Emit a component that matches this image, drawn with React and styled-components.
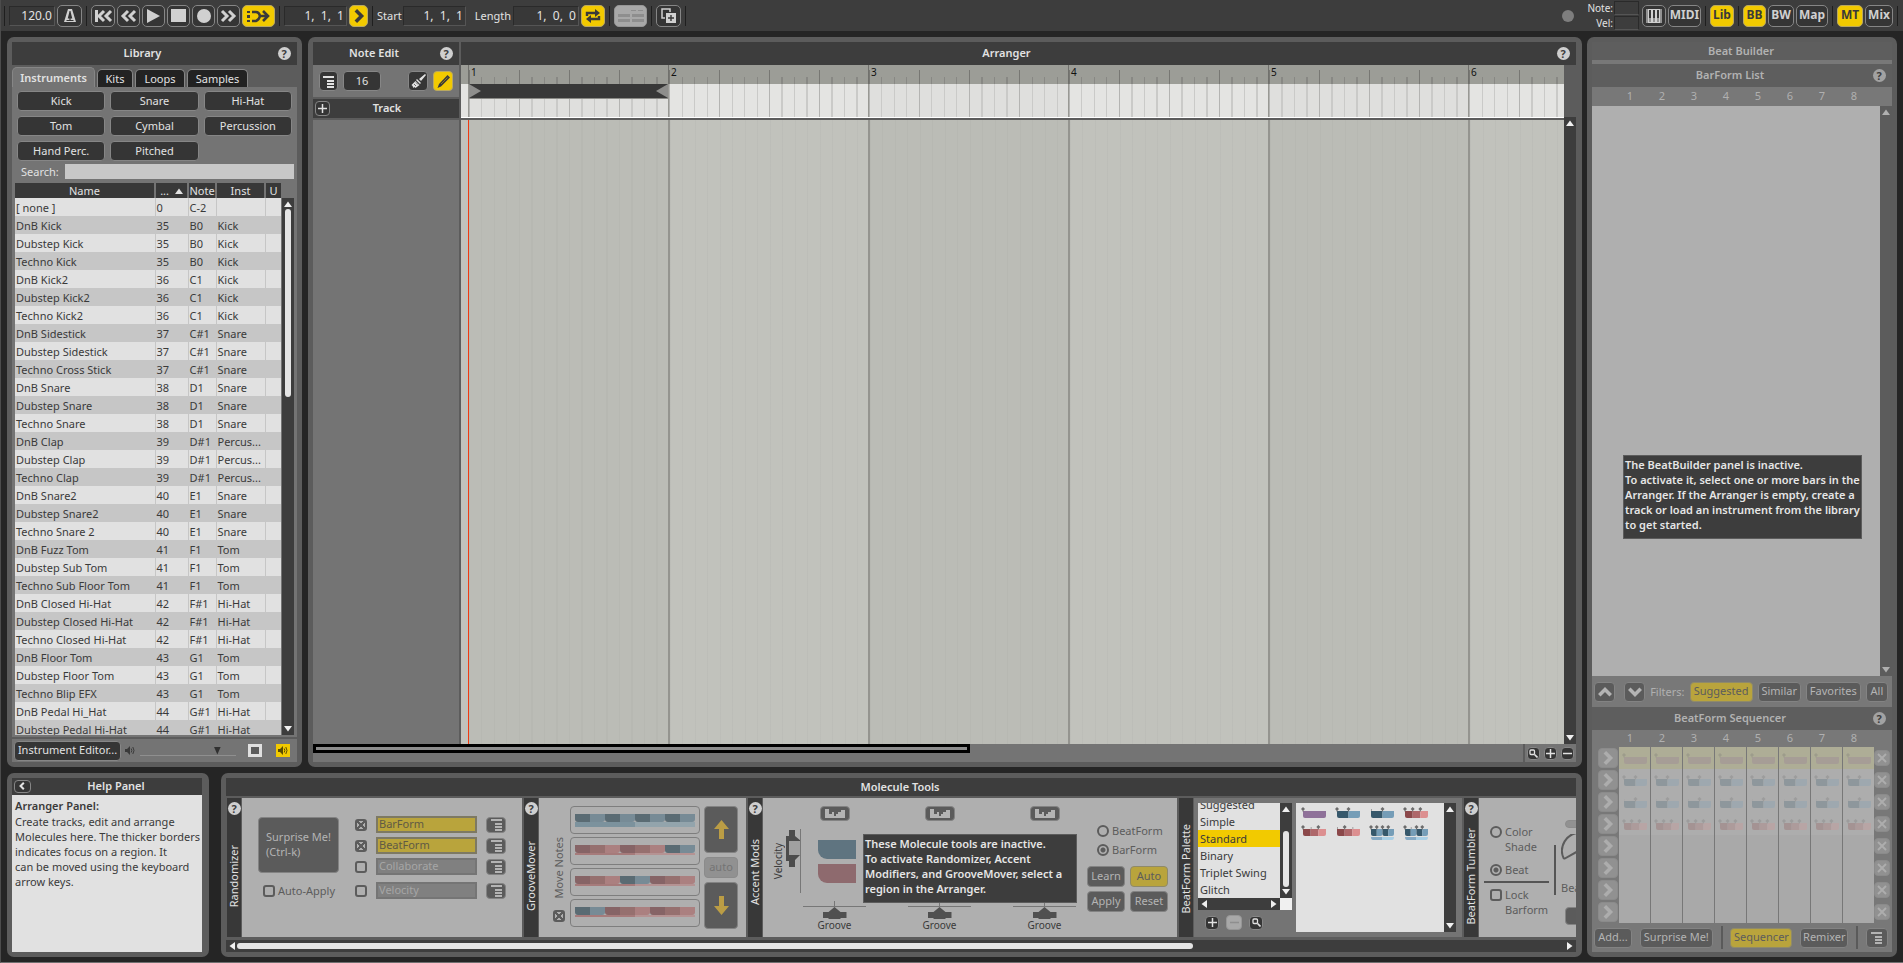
import React from "react";
import styled, { createGlobalStyle, css } from "styled-components";

const font = '"Noto Sans", "Open Sans", sans-serif';
const c = {
  page: "#252525",
  bar: "#3d3d3d",
  frame: "#5c5c5c",
  body: "#747474",
  edge: "#868686",
  dark: "#353535",
  text: "#e2e2e2",
  ink: "#3a3a3a",
  yellow: "#f2ca00",
  dim: "#afafaf",
  dimText: "#5c5c5c",
  dimYellow: "#b9a43c",
};

const Global = createGlobalStyle`
  * { box-sizing: border-box; }
  body { margin: 0; background: ${c.page}; }
  button, input, table { font: inherit; color: inherit; }
  button { padding: 0; cursor: pointer; }
  h1, h2, p, ul { margin: 0; padding: 0; }
`;

/* ---------- page frame ---------- */
const Page = styled.div`
  height: 100vh;
  min-height: 720px;
  display: flex;
  flex-direction: column;
  overflow: hidden;
  font: 11px/15px ${font};
  color: ${c.text};
  background: ${c.page};
  border-left: 1px solid #4c4c4c;
  border-bottom: 1px solid #707070;
`;
const Workspace = styled.main`
  flex: 1;
  min-height: 0;
  display: flex;
  gap: 5px;
  padding: 6px 6px 5px 6px;
`;
const LeftArea = styled.div`
  flex: 1;
  min-width: 0;
  display: flex;
  flex-direction: column;
  gap: 6px;
`;
const UpperRow = styled.div`
  flex: 1;
  min-height: 0;
  display: flex;
  gap: 6px;
`;
const LowerRow = styled.div`
  height: 184px;
  display: flex;
  gap: 12px;
`;
const Panel = styled.section`
  display: flex;
  flex-direction: column;
  flex: ${(p) => (p.$width ? `0 0 ${p.$width}` : "1")};
  min-width: 0;
  overflow: hidden;
  padding: 5px;
  padding-right: ${(p) => p.$right || "5px"};
  border-radius: 7px;
  background: ${c.frame};
`;
const Header = styled.header`
  flex: 0 0 ${(p) => p.$h || "23px"};
  display: grid;
  grid-template-columns: ${(p) => p.$cols || "1fr 22px"};
  align-items: center;
  justify-items: center;
  padding: 0 2px 1px 0;
  background: ${(p) => (p.$dim ? "#5e5e5e" : c.bar)};
  color: ${(p) => (p.$dim ? "#b2b2b2" : c.text)};
`;
const Title = styled.h2`
  padding-bottom: 1px;
  font-size: 11px;
  line-height: 15px;
  font-weight: 600;
`;
const HelpDot = styled.button`
  width: 13px;
  height: 13px;
  border: 0;
  border-radius: 50%;
  background: ${(p) => (p.$dim ? "#a2a2a2" : "#cfcfcf")};
  color: #3d3d3d;
  font-size: 11px;
  font-weight: 700;
  line-height: 13px;
`;
const Help = ({ dim }) => (
  <HelpDot $dim={dim} aria-label="Help">?</HelpDot>
);

/* ---------- buttons ---------- */
const tones = {
  dark: css`background: ${c.dark}; border-color: ${c.edge}; color: ${c.text};`,
  yellow: css`background: ${c.yellow}; border-color: #b9a860; color: ${c.ink};`,
  dim: css`background: #5b5b5b; border-color: #838383; color: #b4b4b4;`,
  dimYellow: css`background: ${c.dimYellow}; border-color: #8f8a6a; color: #5c5c5c;`,
  ghost: css`background: #919191; border-color: #8b8b8b; color: #adadad;`,
  light: css`background: #a8a8a8; border-color: #969696; color: #8e8e8e;`,
};
const Btn = styled.button`
  flex: none;
  display: flex;
  align-items: center;
  justify-content: center;
  width: ${(p) => p.$w || "auto"};
  height: ${(p) => p.$h || "20px"};
  border: 1px solid;
  border-radius: ${(p) => p.$r || "4px"};
  white-space: nowrap;
  ${(p) => tones[p.$tone || "dark"]}
  &:not([aria-label]) { padding-bottom: 2px; }
`;

/* ---------- icons ---------- */
const Svg = ({ w, h, children }) => (
  <svg width={w} height={h} viewBox={`0 0 ${w} ${h}`} fill="currentColor" aria-hidden="true">
    {children}
  </svg>
);
const ListIcon = () => (
  <Svg w={13} h={13}>
    <path d="M1 1h11v2H1zM5 5h7v2H5zM5 8h7v2H5zM5 11h7v2H5z" />
  </Svg>
);
const PlusIcon = () => (
  <Svg w={9} h={9}><path d="M4 0h1v4h4v1H5v4H4V5H0V4h4z" stroke="currentColor" strokeWidth=".5" /></Svg>
);
const MinusIcon = () => (
  <Svg w={9} h={9}><path d="M0 4h9v1H0z" stroke="currentColor" strokeWidth=".5" /></Svg>
);
const SearchIcon = () => (
  <Svg w={9} h={9}>
    <rect x="1" y="1" width="4.500" height="4.500" rx="1" fill="none" stroke="currentColor" strokeWidth="1.300" />
    <path d="M5.500 5.500l3 3" stroke="currentColor" strokeWidth="1.600" />
  </Svg>
);
const Chevron = ({ dir = "right", w = 11, h = 11 }) => {
  const turn = { right: 0, down: 90, left: 180, up: 270 }[dir];
  return (
    <svg width={w} height={h} viewBox="0 0 11 11" aria-hidden="true">
      <path d="M3 1l4.500 4.500L3 10" transform={`rotate(${turn} 5.500 5.500)`} fill="none" stroke="currentColor" strokeWidth="2.800" />
    </svg>
  );
};
const CrossIcon = () => (
  <Svg w={10} h={10}><path d="M1 1l8 8M9 1l-8 8" stroke="currentColor" strokeWidth="2" /></Svg>
);
const Tri = ({ dir }) => (
  <svg width="8" height="8" viewBox="0 0 8 8" aria-hidden="true">
    <path
      fill="currentColor"
      d={{ up: "M4 1.500L8 7H0z", down: "M4 6.500L8 1H0z", left: "M1.500 4L7 0v8z", right: "M6.500 4L1 0v8z" }[dir]}
    />
  </svg>
);
const Speaker = ({ color }) => (
  <svg width="10" height="9" viewBox="0 0 10 9" aria-hidden="true">
    <path d="M0 3h2l3-3v9L2 6H0z" fill={color} />
    <path d="M6.200 2.500q1.300 2 0 4M7.800 1q2.400 3.500 0 7" fill="none" stroke={color} strokeWidth="1" />
  </svg>
);

/* ---------- toolbar ---------- */
const Toolbar = styled.nav`
  flex: 0 0 31px;
  display: flex;
  justify-content: space-between;
  padding: 0 3px 0 1px;
  background: ${c.bar};
`;
const Tools = styled.div`
  display: flex;
  align-items: center;
  gap: 2px;
`;
const Sep = styled.i`
  flex: none;
  width: 1px;
  height: 20px;
  margin: 0 2px;
  background: #1f1f1f;
`;
const NumberBox = styled.input`
  width: ${(p) => p.$w || "63px"};
  height: 20px;
  padding: 0 2px;
  border: 1px solid #2a2a2a;
  border-right-color: #555;
  border-bottom-color: #555;
  background: #383838;
  text-align: right;
  font-size: 12px;
  outline: 0;
`;
const ToolLabel = styled.label`
  width: ${(p) => p.$w};
  text-align: right;
`;
const ToolBtn = styled(Btn)`
  height: 22px;
  border-radius: 5px;
  font-weight: 700;
  font-size: 12px;
  ${(p) => (!p.$tone || p.$tone === "dark") && "color: #d0d0d0;"}
`;
const Led = styled.span`
  width: 12px;
  height: 12px;
  margin-right: 13px;
  border-radius: 50%;
  background: #7e7e7e;
`;
const MidiReadout = styled.div`
  display: grid;
  grid-template-columns: 24px 25px;
  grid-auto-rows: 15px;
  align-items: center;
  justify-items: end;
  column-gap: 1px;
  margin-right: 1px;
  font-size: 10px;
`;
const ReadoutBox = styled.output`
  width: 25px;
  height: 14px;
  border: 1px solid #2a2a2a;
  border-bottom-color: #555;
`;

const TopBar = () => (
  <Toolbar>
    <Tools>
      <Sep />
      <NumberBox $w="46px" aria-label="Tempo" defaultValue="120.0" />
      <ToolBtn $w="25px" aria-label="Metronome">
        <Svg w={16} h={16}>
          <path d="M6 1h4l4 13H2z" />
          <path d="M8 3v9M4.500 12.500h7M6.500 10L8 4l1.500 6z" stroke="#353535" strokeWidth="1.200" fill="#353535" />
        </Svg>
      </ToolBtn>
      <Sep />
      <ToolBtn $w="24px" aria-label="To start">
        <Svg w={19} h={14}>
          <path d="M1 1h3v12H1z" />
          <path d="M10 2L5 7l5 5M17 2l-5 5 5 5" fill="none" stroke="currentColor" strokeWidth="3" />
        </Svg>
      </ToolBtn>
      <ToolBtn $w="23px" aria-label="Rewind">
        <Svg w={17} h={14}><path d="M8 2L3 7l5 5M15 2l-5 5 5 5" fill="none" stroke="currentColor" strokeWidth="3" /></Svg>
      </ToolBtn>
      <ToolBtn $w="23px" aria-label="Play"><Svg w={15} h={14}><path d="M1 0l13 7-13 7z" /></Svg></ToolBtn>
      <ToolBtn $w="23px" aria-label="Stop"><Svg w={15} h={13}><path d="M0 0h15v13H0z" /></Svg></ToolBtn>
      <ToolBtn $w="23px" aria-label="Record"><Svg w={14} h={14}><circle cx="7" cy="7" r="7" /></Svg></ToolBtn>
      <ToolBtn $w="23px" aria-label="Forward">
        <Svg w={17} h={14}><path d="M2 2l5 5-5 5M9 2l5 5-5 5" fill="none" stroke="currentColor" strokeWidth="3" /></Svg>
      </ToolBtn>
      <ToolBtn $w="33px" $tone="yellow" aria-label="Follow">
        <Svg w={26} h={14}>
          <path d="M1 2h3v2H1zM1 6h3v3H1zM1 11h3v2H1z" />
          <path d="M6 3h4q3 0 4 4h7M6 12h4q3-1 4-5M17 2l5 5-5 5" fill="none" stroke="currentColor" strokeWidth="2.600" />
        </Svg>
      </ToolBtn>
      <Sep />
      <NumberBox aria-label="Position" defaultValue="1,  1,  1" />
      <ToolBtn $w="19px" $tone="yellow" aria-label="Go"><Chevron w={14} h={14} /></ToolBtn>
      <Sep />
      <ToolLabel $w="24px" htmlFor="start">Start</ToolLabel>
      <NumberBox id="start" defaultValue="1,  1,  1" />
      <ToolLabel $w="43px" htmlFor="length">Length</ToolLabel>
      <NumberBox $w="66px" id="length" defaultValue="1,  0,  0" />
      <ToolBtn $w="24px" $tone="yellow" aria-label="Loop">
        <Svg w={16} h={14}>
          <path d="M2 7V4h9M14 7v3H5" fill="none" stroke="currentColor" strokeWidth="2.400" />
          <path d="M10 0l5 4-5 4zM6 6l-5 4 5 4z" />
        </Svg>
      </ToolBtn>
      <Sep />
      <ToolBtn $w="33px" $tone="light" aria-label="Split">
        <Svg w={26} h={12}><path d="M0 4h12v3H0zM14 4h12v3H14zM0 9h12v3H0zM14 9h12v3H14zM13 0h5v1h-5zM20 0h5v1h-5z" /></Svg>
      </ToolBtn>
      <Sep />
      <ToolBtn $w="25px" aria-label="Duplicate">
        <Svg w={15} h={15}>
          <path d="M4 10H1V1h8v3" fill="none" stroke="currentColor" strokeWidth="1.500" />
          <rect x="5" y="5" width="10" height="10" />
          <path d="M10 7v6M7 10h6" stroke="#353535" strokeWidth="1.400" />
        </Svg>
      </ToolBtn>
      <Sep />
    </Tools>
    <Tools>
      <Led />
      <MidiReadout>
        <span>Note:</span><ReadoutBox /><span>Vel:</span><ReadoutBox />
      </MidiReadout>
      <ToolBtn $w="24px" aria-label="Keyboard">
        <Svg w={16} h={14}>
          <rect width="16" height="14" />
          <path d="M3 1h2v8H3zM7 1h2v8H7zM11 1h2v8h-2z" fill="#353535" />
          <path d="M4 8v5M8 8v5M12 8v5M1 0v14M15 0v14" stroke="#353535" strokeWidth=".8" />
        </Svg>
      </ToolBtn>
      <ToolBtn $w="33px">MIDI</ToolBtn>
      <Sep />
      <ToolBtn $w="24px" $tone="yellow">Lib</ToolBtn>
      <Sep />
      <ToolBtn $w="23px" $tone="yellow">BB</ToolBtn>
      <ToolBtn $w="26px">BW</ToolBtn>
      <ToolBtn $w="32px">Map</ToolBtn>
      <Sep />
      <ToolBtn $w="26px" $tone="yellow">MT</ToolBtn>
      <ToolBtn $w="28px">Mix</ToolBtn>
      <Sep />
    </Tools>
  </Toolbar>
);

/* ---------- scroll bars ---------- */
const ScrollTrack = styled.div`
  flex: none;
  display: flex;
  align-items: center;
  justify-content: space-between;
  gap: 1px;
  padding: ${(p) => (p.$across ? "0 2px" : "2px 0")};
  flex-direction: ${(p) => (p.$across ? "row" : "column")};
  width: ${(p) => (p.$across ? "auto" : "12px")};
  height: ${(p) => (p.$across ? "12px" : "auto")};
  background: ${(p) => (p.$dim ? c.frame : c.bar)};
  color: ${(p) => (p.$dim ? "#b0b0b0" : "#f0f0f0")};
`;
const ScrollRun = styled.div`
  flex: 1;
  align-self: stretch;
  display: flex;
  justify-content: ${(p) => p.$end || "flex-start"};
  align-items: center;
  flex-direction: ${(p) => (p.$across ? "row" : "column")};
`;
const Thumb = styled.div`
  flex: 0 0 ${(p) => p.$size};
  ${(p) => (p.$across ? "height: 6px;" : "width: 6px;")}
  border-radius: 3px;
  background: #e4e4e4;
`;
const Scroll = ({ across, dim, size, end }) => (
  <ScrollTrack $across={across} $dim={dim}>
    <Tri dir={across ? "left" : "up"} />
    <ScrollRun $across={across} $end={end}>{size && <Thumb $across={across} $size={size} />}</ScrollRun>
    <Tri dir={across ? "right" : "down"} />
  </ScrollTrack>
);

/* ---------- library ---------- */
const Tabs = styled.div`
  flex: 0 0 22px;
  display: flex;
  align-items: flex-end;
  gap: 2px;
`;
const Tab = styled.button`
  height: ${(p) => (p.$on ? "20px" : "18px")};
  width: ${(p) => p.$w};
  border: 1px solid ${c.edge};
  border-bottom: 0;
  border-radius: 5px 5px 0 0;
  background: ${(p) => (p.$on ? c.body : "#222")};
  font-weight: ${(p) => (p.$on ? 600 : 400)};
`;
const LibBody = styled.div`
  flex: 1;
  min-height: 0;
  display: flex;
  flex-direction: column;
  padding: 4px 3px 2px;
  background: ${c.body};
`;
const Kinds = styled.div`
  display: grid;
  grid-template-columns: repeat(3, 1fr);
  gap: 5px;
  padding: 0 2px;
`;
const SearchRow = styled.div`
  display: flex;
  align-items: center;
  gap: 6px;
  margin: 3px 0 4px;
  padding-left: 6px;
`;
const SearchInput = styled.input`
  flex: 1;
  min-width: 0;
  height: 15px;
  border: 0;
  background: #c8c8c8;
  color: ${c.ink};
`;
const ListRow = styled.div`
  flex: 1;
  min-height: 0;
  display: flex;
`;
const ListClip = styled.div`
  flex: 1;
  overflow: hidden;
`;
const ListScroll = styled.div`
  display: flex;
  padding: 15px 0 0 1px;
`;
const Grid = styled.table`
  width: 100%;
  table-layout: fixed;
  border-collapse: collapse;
  color: ${c.ink};
`;
const Th = styled.th`
  width: ${(p) => p.$w};
  height: 15px;
  padding: 0;
  overflow: hidden;
  line-height: 15px;
  font-weight: 400;
  white-space: nowrap;
  background: #383838;
  color: ${c.text};
  border-right: 2px solid ${c.body};
  &:last-child { border-right: 0; }
  svg { margin-left: 3px; }
`;
const Tr = styled.tr`
  height: 18px;
  background: #e1e1e1;
  &:nth-child(even) { background: #c6c6c6; }
`;
const Td = styled.td`
  height: 18px;
  padding: 1px 0 0 1px;
  line-height: 17px;
  overflow: hidden;
  white-space: nowrap;
  border-right: 1px solid #c6c6c6;
  &:last-child { border-right: 0; }
`;
const LibFooter = styled.footer`
  flex: 0 0 25px;
  display: flex;
  align-items: center;
  gap: 4px;
  padding: 0 7px 0 2px;
  border-top: 2px solid ${c.frame};
  background: ${c.body};
`;
const Volume = styled.input`
  appearance: none;
  flex: 1;
  min-width: 0;
  height: 12px;
  margin: 0 8px 0 1px;
  background: linear-gradient(#8f8f8f, #8f8f8f) 0 10px / 100% 1px no-repeat;
  &::-webkit-slider-thumb {
    appearance: none;
    width: 7px;
    height: 8px;
    background: #303030;
    clip-path: polygon(0 0, 100% 0, 50% 100%);
  }
`;
const SmallSquare = styled.button`
  display: flex;
  align-items: center;
  justify-content: center;
  width: 14px;
  height: 13px;
  margin-left: ${(p) => (p.$stop ? "0" : "10px")};
  border: ${(p) => (p.$stop ? "3px solid #e0e0e0" : "0")};
  background: ${(p) => (p.$stop ? "#5c5c5c" : c.yellow)};
`;

const kinds = ["Kick", "Snare", "Hi-Hat", "Tom", "Cymbal", "Percussion", "Hand Perc.", "Pitched"];
const sounds = [
  ["[ none ]", 0, "C-2", ""],
  ["DnB Kick", 35, "B0", "Kick"], ["Dubstep Kick", 35, "B0", "Kick"], ["Techno Kick", 35, "B0", "Kick"],
  ["DnB Kick2", 36, "C1", "Kick"], ["Dubstep Kick2", 36, "C1", "Kick"], ["Techno Kick2", 36, "C1", "Kick"],
  ["DnB Sidestick", 37, "C#1", "Snare"], ["Dubstep Sidestick", 37, "C#1", "Snare"], ["Techno Cross Stick", 37, "C#1", "Snare"],
  ["DnB Snare", 38, "D1", "Snare"], ["Dubstep Snare", 38, "D1", "Snare"], ["Techno Snare", 38, "D1", "Snare"],
  ["DnB Clap", 39, "D#1", "Percus..."], ["Dubstep Clap", 39, "D#1", "Percus..."], ["Techno Clap", 39, "D#1", "Percus..."],
  ["DnB Snare2", 40, "E1", "Snare"], ["Dubstep Snare2", 40, "E1", "Snare"], ["Techno Snare 2", 40, "E1", "Snare"],
  ["DnB Fuzz Tom", 41, "F1", "Tom"], ["Dubstep Sub Tom", 41, "F1", "Tom"], ["Techno Sub Floor Tom", 41, "F1", "Tom"],
  ["DnB Closed Hi-Hat", 42, "F#1", "Hi-Hat"], ["Dubstep Closed Hi-Hat", 42, "F#1", "Hi-Hat"], ["Techno Closed Hi-Hat", 42, "F#1", "Hi-Hat"],
  ["DnB Floor Tom", 43, "G1", "Tom"], ["Dubstep Floor Tom", 43, "G1", "Tom"], ["Techno Blip EFX", 43, "G1", "Tom"],
  ["DnB Pedal Hi_Hat", 44, "G#1", "Hi-Hat"], ["Dubstep Pedal Hi-Hat", 44, "G#1", "Hi-Hat"],
];

const Library = () => (
  <Panel $width="295px">
    <Header><Title>Library</Title><Help /></Header>
    <Tabs>
      <Tab $on $w="83px">Instruments</Tab>
      <Tab $w="36px">Kits</Tab>
      <Tab $w="50px">Loops</Tab>
      <Tab $w="61px">Samples</Tab>
    </Tabs>
    <LibBody>
      <Kinds>{kinds.map((k) => <Btn key={k}>{k}</Btn>)}</Kinds>
      <SearchRow>
        <label htmlFor="search">Search:</label>
        <SearchInput id="search" />
      </SearchRow>
      <ListRow>
        <ListClip>
          <Grid>
            <thead>
              <tr>
                <Th $w="140px">Name</Th>
                <Th $w="33px">... <Tri dir="up" /></Th>
                <Th $w="28px">Note</Th>
                <Th $w="49px">Inst</Th>
                <Th>U</Th>
              </tr>
            </thead>
            <tbody>
              {sounds.map((s) => (
                <Tr key={s[0]}>{s.map((v, i) => <Td key={i}>{v}</Td>)}<Td /></Tr>
              ))}
            </tbody>
          </Grid>
        </ListClip>
        <ListScroll><Scroll size="188px" /></ListScroll>
      </ListRow>
    </LibBody>
    <LibFooter>
      <Btn $w="107px">Instrument Editor...</Btn>
      <Speaker color="#3a3a3a" />
      <Volume type="range" aria-label="Preview volume" defaultValue="83" />
      <SmallSquare $stop aria-label="Stop preview" />
      <SmallSquare aria-label="Preview sound"><Speaker color="#5a4c00" /></SmallSquare>
    </LibFooter>
  </Panel>
);

/* ---------- arranger ---------- */
const ArrangerBody = styled.div`
  flex: 1;
  min-height: 0;
  display: flex;
  gap: 2px;
`;
const TrackColumn = styled.div`
  flex: 0 0 146px;
  display: flex;
  flex-direction: column;
  gap: 2px;
`;
const NoteRow = styled.div`
  height: 32px;
  display: flex;
  align-items: center;
  padding: 0 6px;
  gap: 5px;
  background: ${c.body};
  > :nth-child(3) { margin-left: auto; }
`;
const TrackList = styled.div`
  flex: 1;
  background: ${c.body};
`;
const TimeBody = styled.div`
  flex: 1;
  min-width: 0;
  min-height: 0;
  display: flex;
`;
const TimeMain = styled.div`
  flex: 1;
  min-width: 0;
  display: flex;
  flex-direction: column;
`;
const TimeSide = styled.div`
  flex: 0 0 12px;
  display: flex;
  flex-direction: column;
  padding-top: 52px;
  > div { flex: 1; }
`;
const Strip = styled.div`
  flex: ${(p) => (p.$h ? `0 0 ${p.$h}` : "1")};
  display: flex;
  overflow: hidden;
  padding-left: 7px;
  background: ${(p) => p.$bg};
  ${(p) => p.$line && "border-bottom: 1px solid #fff;"}
`;
const ticks = (step, color, h) =>
  `repeating-linear-gradient(90deg, ${color} 0 1px, transparent 1px ${step}) 0 100% / 100% ${h} no-repeat`;
const RulerBar = styled.div`
  flex: 0 0 200px;
  padding-left: 2px;
  font-size: 10px;
  line-height: 15px;
  color: #111;
  border-left: 1px solid #70706c;
  background: ${ticks("50px", "#777773", "14px")}, ${ticks("12.5px", "#888884", "7px")};
`;
const LaneBar = styled.div`
  flex: 0 0 200px;
  border-left: 1px solid #999994;
  background: ${ticks("50px", "#b4b4b2", "100%")}, ${ticks("12.5px", "#cacac8", "100%")},
    ${(p) => (p.$odd ? "#dfdfdd" : "#e4e4e2")};
`;
const GridBar = styled.div`
  flex: 0 0 200px;
  border-left: ${(p) => (p.$first ? "1px solid #f03a10" : "2px solid #94948f")};
  background: ${ticks("12.5px", "rgba(0, 0, 0, 0.025)", "100%")}, ${(p) => (p.$odd ? "#bbbcb6" : "#c1c2bc")};
`;
const Region = styled.div`
  display: flex;
  justify-content: space-between;
  height: 15px;
  background: #383838;
  border-bottom: 1px solid #8a8a86;
  color: #8e8e8c;
`;
const ArrFooter = styled.footer`
  flex: 0 0 18px;
  display: flex;
  align-items: flex-start;
  justify-content: space-between;
  background: ${c.body};
`;
const Overview = styled.div`
  width: 52%;
  height: 9px;
  border: solid #000;
  border-width: 3px;
  background: #8c8c8c;
`;
const ZoomBtns = styled.div`
  height: 18px;
  display: flex;
  align-items: center;
  gap: 4px;
  padding: 0 2px;
  border-left: 2px solid ${c.frame};
`;
const SplitHead = styled.div`
  display: grid;
  grid-template-columns: 146px 1fr;
  gap: 2px;
  > * { height: 23px; }
`;
const bars = [1, 2, 3, 4, 5, 6];

const Arranger = () => (
  <Panel $right="6px">
    <SplitHead>
      <Header><Title>Note Edit</Title><Help /></Header>
      <Header><Title>Arranger</Title><Help /></Header>
    </SplitHead>
    <ArrangerBody>
      <TrackColumn>
        <NoteRow>
          <Btn $w="19px" aria-label="Note menu"><ListIcon /></Btn>
          <Btn $w="38px">16</Btn>
          <Btn $w="20px" aria-label="Brush">
            <Svg w={15} h={15}>
              <path d="M14 0l1 1-5 6-2-2zM6 5l4 4-1 1-4-4z" />
              <path d="M4.500 7l4 4-4 3-1-1-1 1-1-2-1-1z" />
              <path d="M3 10l2 2M5 8.500l2 2" stroke="#353535" strokeWidth=".7" />
            </Svg>
          </Btn>
          <Btn $w="20px" $tone="yellow" aria-label="Pencil">
            <Svg w={15} h={15}>
              <path d="M11.500 1l2.500 2.500L5 12.500 1.500 14 3 10z" />
              <path d="M5 10l6.500-6.500" stroke="#8d7a20" strokeWidth="1" />
            </Svg>
          </Btn>
        </NoteRow>
        <Header $h="19px" $cols="18px 1fr 14px">
          <Btn $w="15px" $h="15px" aria-label="Add track"><PlusIcon /></Btn>
          <Title>Track</Title>
        </Header>
        <TrackList />
      </TrackColumn>
      <TimeBody>
        <TimeMain>
          <Strip $h="19px" $bg="#9c9d97">{bars.map((b) => <RulerBar key={b}>{b}</RulerBar>)}</Strip>
          <Strip $h="34px" $bg="#e4e4e2" $line>
            {bars.map((b) => (
              <LaneBar key={b} $odd={b % 2}>
                {b === 1 && (
                  <Region>
                    <Svg w={12} h={14}><path d="M0 0l12 7-12 7z" /></Svg>
                    <Svg w={12} h={14}><path d="M12 0L0 7l12 7z" /></Svg>
                  </Region>
                )}
              </LaneBar>
            ))}
          </Strip>
          <Strip $h="2px" $bg={c.frame} />
          <Strip $bg="#c1c2bc">{bars.map((b) => <GridBar key={b} $first={b === 1} $odd={b % 2} />)}</Strip>
        </TimeMain>
        <TimeSide><Scroll /></TimeSide>
      </TimeBody>
    </ArrangerBody>
    <ArrFooter>
      <Overview />
      <ZoomBtns>
        <Btn $w="13px" $h="13px" aria-label="Zoom"><SearchIcon /></Btn>
        <Btn $w="13px" $h="13px" aria-label="Zoom in"><PlusIcon /></Btn>
        <Btn $w="13px" $h="13px" aria-label="Zoom out"><MinusIcon /></Btn>
      </ZoomBtns>
    </ArrFooter>
  </Panel>
);

/* ---------- help panel ---------- */
const HelpText = styled.div`
  flex: 1;
  padding: 3px 0 0 3px;
  background: #e1e1e1;
  color: ${c.ink};
  strong { display: block; line-height: 16px; font-weight: 600; }
`;
const HelpPanel = () => (
  <Panel $width="202px" $right="7px">
    <Header $h="17px" $cols="20px 1fr">
      <Btn $w="17px" $h="13px" aria-label="Collapse"><Chevron dir="left" w={8} h={8} /></Btn>
      <Title>Help Panel</Title>
    </Header>
    <HelpText>
      <strong>Arranger Panel:</strong>
      <p>
        Create tracks, edit and arrange<br />Molecules here. The thicker borders<br />indicates focus on a region. It
        <br />can be moved using the keyboard<br />arrow keys.
      </p>
    </HelpText>
  </Panel>
);

/* ---------- beat drawings ---------- */
const palettes = {
  violet: ["#8f7199"],
  blue2: ["#36586b", "#759db7"],
  red3: ["#8b484a", "#ae676a", "#dc8f90"],
  blue4: ["#36586b", "#759db7", "#36586b", "#759db7"],
};
/* marks: "o" is a note, "." is a faint tick */
const Beat = ({ kind, marks, sub }) => {
  const cols = palettes[kind];
  const step = 23 / cols.length;
  const last = cols.length - 1;
  return (
    <svg width="26" height="16" viewBox="0 0 26 16" aria-hidden="true">
      {cols.map((col, i) => {
        const x = 2 + i * step;
        const e = x + step;
        const l = i === 0 || (last === 3 && i === 2) ? 2 : 0;
        const r = i === last || (last === 3 && i === 1) ? 2 : 0;
        return <path key={i} fill={col} d={`M${x} 4H${e}V${11 - r}Q${e} 11 ${e - r} 11H${x + l}Q${x} 11 ${x} ${11 - l}Z`} />;
      })}
      {sub && <path d="M2 12h11v3H4q-2 0-2-3z" fill="#86aac5" />}
      {sub && <path d="M13 12h12q0 3-2 3H13z" fill="#a9cfe5" />}
      {marks.split("").map((m, i) => {
        const x = 2 + (i * 23) / marks.length;
        return m === "o" ? (
          <path key={i} fill="#6c6c6c" d={`M${x} 0l2 2-1.500 1.500v1h-1v-1L${x - 2} 2z`} />
        ) : (
          <path key={i} fill="#a0a0a0" d={`M${x} 2h1v2h-1z`} />
        );
      })}
    </svg>
  );
};

/* ---------- molecule tools ---------- */
const Modules = styled.div`
  flex: 0 0 144px;
  display: flex;
  gap: 2px;
  overflow: hidden;
  padding: 2px 0 3px 1px;
`;
const Module = styled.article`
  flex: 0 0 ${(p) => p.$w};
  display: flex;
  gap: 1px;
`;
const Spine = styled.div`
  flex: 0 0 14px;
  display: flex;
  flex-direction: column;
  align-items: center;
  padding: 4px 0 ${(p) => p.$lift || "0"};
  background: #383838;
`;
const SpineName = styled.span`
  margin: auto 0;
  writing-mode: vertical-rl;
  rotate: 180deg;
  line-height: 14px;
  white-space: nowrap;
`;
const ModuleBody = styled.div`
  flex: 1;
  min-width: 0;
  display: flex;
  background: ${(p) => p.$bg || c.dim};
  color: ${c.dimText};
  padding: ${(p) => p.$pad || "0"};
  gap: ${(p) => p.$gap || "0"};
`;
const Column = styled.div`
  display: flex;
  flex-direction: column;
  align-items: ${(p) => p.$align || "flex-start"};
  gap: ${(p) => p.$gap || "4px"};
  padding: ${(p) => p.$pad || "0"};
  ${(p) => p.$w && `width: ${p.$w};`}
`;
const Line = styled.div`
  display: flex;
  align-items: ${(p) => p.$align || "center"};
  gap: ${(p) => p.$gap || "9px"};
  ${(p) => p.$top && `margin-top: ${p.$top};`}
`;
const Check = styled.input`
  appearance: none;
  flex: none;
  width: 12px;
  height: 12px;
  margin: ${(p) => p.$m || "0"};
  border: 2px solid ${c.dimText};
  border-radius: ${(p) => (p.type === "radio" ? "50%" : "3px")};
  &:checked {
    background: ${(p) =>
      p.type === "radio"
        ? `radial-gradient(${c.dimText} 0 2px, transparent 3px)`
        : `linear-gradient(45deg, transparent 42%, ${c.dimText} 42% 58%, transparent 58%),
           linear-gradient(135deg, transparent 42%, ${c.dimText} 42% 58%, transparent 58%)`};
  }
`;
const Opt = styled.label`
  display: flex;
  align-items: ${(p) => p.$align || "center"};
  gap: 3px;
`;
const Meter = styled.div`
  width: 101px;
  height: 17px;
  padding: 0 1px;
  border: 2px solid ${(p) => (p.$on ? "#7d7963" : "#757575")};
  line-height: 12px;
  background: ${(p) => (p.$on ? c.dimYellow : "#808080")};
  color: ${(p) => (p.$on ? "#605a44" : "#a6a6a6")};
`;
const BigBtn = styled(Btn)`
  justify-content: flex-start;
  padding-left: 7px;
  text-align: left;
  line-height: 15px;
`;
const PatternBtn = styled.button`
  width: 130px;
  height: 28px;
  display: flex;
  justify-content: center;
  align-items: center;
  border: 1px solid #7e7e7e;
  border-radius: 4px;
  background: transparent;
`;
const SideText = styled.span`
  writing-mode: vertical-rl;
  rotate: 180deg;
  line-height: 14px;
  font-size: ${(p) => p.$size || "11px"};
  color: ${(p) => p.$color || "inherit"};
`;

const B = ["#5a6b73", "#778b96"];
const R = ["#866466", "#96706f", "#ab8080"];
const patterns = [
  [[B, B, B, B], "#7c929d", "#93a4ac"],
  [[R, R, B], "#a67b7b", "#b59393"],
  [[R, B, R], "#a67b7b", "#b59393"],
  [[B, R, R], "#a67b7b", "#b59393"],
];
const Pattern = ({ id, groups, low, low2, tall }) => {
  const w = 15;
  let x = 0;
  const beats = groups.map((g, gi) => {
    const start = x;
    x += g.length * w;
    return (
      <g key={gi}>
        <clipPath id={`beat-${id}-${gi}`}>
          <path d={`M${start} 0H${x}V5Q${x} 8 ${x - 3} 8H${start + 3}Q${start} 8 ${start} 5Z`} />
        </clipPath>
        <g clipPath={`url(#beat-${id}-${gi})`}>
          {g.map((col, i) => <rect key={i} x={start + i * w} width={w} height="8" fill={col} />)}
        </g>
      </g>
    );
  });
  return (
    <svg width="120" height="13" viewBox="0 0 120 13" aria-hidden="true">
      {beats}
      <rect y="8" width="60" height={tall ? 5 : 2} fill={low} />
      <rect x="60" y="8" width="60" height={tall ? 5 : 2} fill={low2} />
    </svg>
  );
};
const Arrow = ({ down }) => (
  <svg width="15" height="19" viewBox="0 0 15 19" aria-hidden="true">
    <path fill="#bb9d45" d={down ? "M5 0h5v10h5l-7.500 9L0 10h5z" : "M7.500 0L15 9h-5v10H5V9H0z"} />
  </svg>
);
const Random = () => (
  <Module $w="295px">
    <Spine><Help /><SpineName>Randomizer</SpineName></Spine>
    <ModuleBody $pad="18px 0 0 16px" $gap="16px">
      <Column $gap="10px" $pad="1px 0 0">
        <BigBtn $w="81px" $h="56px" $tone="dim">Surprise Me!<br />(Ctrl-k)</BigBtn>
        <Opt><Check type="checkbox" $m="0 0 0 5px" />Auto-Apply</Opt>
      </Column>
      <Column>
        {[["BarForm", true], ["BeatForm", true], ["Collaborate", false], ["Velocity", false]].map(([n, on]) => (
          <Line key={n} $top={n === "Velocity" ? "3px" : ""}>
            <Check type="checkbox" defaultChecked={on} aria-label={n} />
            <Meter $on={on}>{n}</Meter>
            <Btn $w="20px" $h="16px" $tone="dim" aria-label={`${n} menu`}><ListIcon /></Btn>
          </Line>
        ))}
      </Column>
    </ModuleBody>
  </Module>
);
const Groove = () => (
  <Module $w="222px">
    <Spine><Help /><SpineName>GrooveMover</SpineName></Spine>
    <ModuleBody $pad="8px 8px 0 12px" $gap="4px">
      <Column $align="center" $gap="11px" $pad="31px 0 0" $w="15px">
        <SideText>Move Notes</SideText>
        <Check type="checkbox" defaultChecked aria-label="Move Notes" />
      </Column>
      <Column $gap="3px">
        {patterns.map(([g, a, b], i) => (
          <PatternBtn key={i} aria-label={`Pattern ${i + 1}`}><Pattern id={i} groups={g} low={a} low2={b} tall={i === 0} /></PatternBtn>
        ))}
      </Column>
      <Column $gap="4px">
        <Btn $w="34px" $h="47px" $tone="dim" aria-label="Move up"><Arrow /></Btn>
        <AutoBtn $w="34px" $h="21px" $tone="ghost">auto</AutoBtn>
        <Btn $w="34px" $h="47px" $tone="dim" aria-label="Move down"><Arrow down /></Btn>
      </Column>
    </ModuleBody>
  </Module>
);
const AutoBtn = styled(Btn)`
  color: #747474;
`;
const AccentColumns = styled.div`
  display: grid;
  grid-template-columns: repeat(3, 63px);
  column-gap: 42px;
  justify-items: center;
  padding-left: 40px;
`;
const AccentMain = styled.div`
  width: 324px;
  display: flex;
  flex-direction: column;
  justify-content: space-between;
  padding: 8px 0 6px 0;
`;
const VelocityRow = styled.div`
  display: flex;
  align-items: center;
  gap: 1px;
  padding-left: 8px;
`;
const Slot = styled.div`
  width: 63px;
  display: flex;
  flex-direction: column;
  align-items: center;
  color: ${c.ink};
  font-size: 10px;
  line-height: 12px;
`;
const GrooveRange = styled.input`
  appearance: none;
  width: 63px;
  height: 18px;
  margin: 0;
  background:
    linear-gradient(#777, #777) 50% 0 / 1px 6px no-repeat,
    linear-gradient(#777, #777) 0 5px / 100% 1px no-repeat;
  &::-webkit-slider-thumb {
    appearance: none;
    width: 24px;
    height: 12px;
    margin-top: 6px;
    background: #505050;
    clip-path: polygon(0 42%, 25% 42%, 50% 0, 75% 42%, 100% 42%, 100% 92%, 75% 92%, 75% 100%, 25% 100%, 25% 92%, 0 92%);
  }
`;
const Swatches = styled.div`
  display: grid;
  gap: 5px;
  margin-left: 12px;
`;
const Swatch = styled.div`
  width: 38px;
  height: 19px;
  border-radius: 0 0 0 9px;
  background: ${(p) => p.$color};
`;
const Accent = () => (
  <Module $w="429px">
    <Spine $lift="7px"><Help /><SpineName>Accent Mods</SpineName></Spine>
    <ModuleBody>
      <AccentMain>
        <AccentColumns>
          {[1, 2, 3].map((n) => (
            <Btn key={n} $w="30px" $h="15px" $tone="dim" aria-label={`Accent shape ${n}`}>
              <Svg w={20} h={9}><path d="M0 0h4v5h3V3h2v4h2V5h2V3h3V1h4v8H0z" /></Svg>
            </Btn>
          ))}
        </AccentColumns>
        <VelocityRow>
          <SideText $size="10px" $color={c.ink}>Velocity</SideText>
          <Svg w={19} h={64}>
            <path d="M3 1h6v6l6 5v13l-6 6v7H3v-6H0V7h3z" fill="#4c4c4c" />
            <path d="M3 12h12v14H3z" fill="#a0a0a0" />
            <path d="M14 0h1v64h-1z" fill="#777" />
          </Svg>
          <Swatches><Swatch $color="#5f7480" /><Swatch $color="#8e6a6e" /></Swatches>
        </VelocityRow>
        <AccentColumns>
          {[1, 2, 3].map((n) => (
            <Slot key={n}>
              <GrooveRange type="range" id={`groove${n}`} defaultValue="50" />
              <label htmlFor={`groove${n}`}>Groove</label>
            </Slot>
          ))}
        </AccentColumns>
      </AccentMain>
      <Column $gap="4px" $pad="25px 0 0 0">
        <Column $gap="4px" $pad="0 0 5px 10px">
          <Opt><Check type="radio" name="form" />BeatForm</Opt>
          <Opt><Check type="radio" name="form" defaultChecked />BarForm</Opt>
        </Column>
        <Line $gap="5px">
          <Btn $w="38px" $h="21px" $tone="dim">Learn</Btn>
          <Btn $w="38px" $h="21px" $tone="dimYellow">Auto</Btn>
        </Line>
        <Line $gap="5px">
          <Btn $w="38px" $h="21px" $tone="dim">Apply</Btn>
          <Btn $w="38px" $h="21px" $tone="dim">Reset</Btn>
        </Line>
      </Column>
    </ModuleBody>
  </Module>
);
const StyleBox = styled.div`
  display: grid;
  grid-template: 95px 12px / 82px 12px;
  background: #f0f0f0;
`;
const StyleList = styled.ul`
  display: flex;
  flex-direction: column;
  justify-content: flex-end;
  overflow: hidden;
  list-style: none;
  background: #e1e1e1;
  color: ${c.ink};
`;
const StyleItem = styled.li`
  flex: 0 0 17px;
  padding-left: 2px;
  line-height: 17px;
  background: ${(p) => (p.$on ? c.yellow : "transparent")};
`;
const BeatSheet = styled.div`
  width: 148px;
  display: grid;
  grid-template-columns: repeat(4, 34px);
  grid-auto-rows: 18px;
  align-content: start;
  padding: 4px 0 0 5px;
  background: #e1e1e1;
`;
const PaletteBtns = styled(Line)`
  padding-left: 7px;
`;
const Palette = () => (
  <Module $w="283px">
    <Spine $lift="2px"><SpineName>BeatForm Palette</SpineName></Spine>
    <ModuleBody $bg={c.body} $pad="5px 5px 5px 4px" $gap="4px">
      <Column $gap="5px">
        <StyleBox>
          <StyleList>
            {["Suggested", "Simple", "Standard", "Binary", "Triplet Swing", "Glitch"].map((n) => (
              <StyleItem key={n} $on={n === "Standard"}>{n}</StyleItem>
            ))}
          </StyleList>
          <Scroll size="56px" end="flex-end" />
          <Scroll across />
        </StyleBox>
        <PaletteBtns $gap="7px">
          <Btn $w="14px" $h="14px" aria-label="Add"><PlusIcon /></Btn>
          <Btn $w="16px" $h="15px" $tone="light" aria-label="Remove"><MinusIcon /></Btn>
          <Btn $w="14px" $h="14px" aria-label="Find"><SearchIcon /></Btn>
        </PaletteBtns>
      </Column>
      <Line $gap="0" $align="stretch">
        <BeatSheet>
          <Beat kind="violet" marks="o" />
          <Beat kind="blue2" marks="oo" />
          <Beat kind="blue2" marks=".o" />
          <Beat kind="red3" marks="ooo" />
          <Beat kind="red3" marks="o.o" />
          <Beat kind="red3" marks=".o." />
          <Beat kind="blue4" marks="oooo" sub />
          <Beat kind="blue4" marks="o.oo" sub />
        </BeatSheet>
        <Scroll />
      </Line>
    </ModuleBody>
  </Module>
);
const Rule = styled.hr`
  margin: 0;
  border: 0;
  background: #555;
  width: ${(p) => p.$w};
  height: ${(p) => p.$h};
`;
const TumblerSide = styled.div`
  flex: none;
  width: 60px;
  display: flex;
  flex-direction: column;
  align-items: flex-start;
  gap: 6px;
  padding-top: 22px;
  white-space: nowrap;
  > button { margin-left: 4px; }
  > span { margin: 2px 0 6px; }
`;
const Tumbler = () => (
  <Module $w="170px">
    <Spine><Help /><SpineName>BeatForm Tumbler</SpineName></Spine>
    <ModuleBody $pad="0 0 0 5px" $gap="5px">
      <Column $gap="0" $pad="26px 0 0 0" $w="65px">
        <Column $gap="8px" $pad="0 0 4px 6px">
          <Opt $align="flex-start"><Check type="radio" name="tumble" $m="2px 0 0" /><span>Color<br />Shade</span></Opt>
          <Opt><Check type="radio" name="tumble" defaultChecked />Beat</Opt>
        </Column>
        <Rule $w="65px" $h="2px" />
        <Column $pad="4px 0 0 6px">
          <Opt $align="flex-start"><Check type="checkbox" $m="2px 0 0" /><span>Lock<br />Barform</span></Opt>
        </Column>
      </Column>
      <Column $pad="47px 0 0 0"><Rule $w="2px" $h="50px" /></Column>
      <TumblerSide>
        <Btn $w="42px" $h="8px" $tone="ghost" aria-label="Tumble" />
        <Svg w={40} h={38}>
          <path d="M3 25A18 18 0 1 1 35 25" fill="none" stroke={c.dimText} strokeWidth="2" />
          <path d="M3 25l16-9" stroke={c.dimText} strokeWidth="2" />
        </Svg>
        <span>Beat</span>
        <Btn $w="40px" $h="18px" $tone="dim" aria-label="Tumbler menu" />
      </TumblerSide>
    </ModuleBody>
  </Module>
);
const Notice = styled.div`
  position: absolute;
  left: ${(p) => p.$left};
  top: ${(p) => p.$top};
  width: ${(p) => p.$w};
  padding: ${(p) => p.$pad};
  border: 1px solid ${c.frame};
  background: ${c.bar};
  color: #e6e6e6;
  font-weight: 600;
  white-space: nowrap;
`;
const Anchor = styled.div`
  position: relative;
  display: flex;
  flex-direction: column;
  flex: 1;
  min-width: 0;
  min-height: 0;
`;
const Molecule = () => (
  <Panel $right="6px">
    <Header $h="18px" $cols="1fr"><Title>Molecule Tools</Title></Header>
    <Anchor>
      <Modules><Random /><Groove /><Accent /><Palette /><Tumbler /></Modules>
      <Scroll across size="72%" />
      <Notice $left="637px" $top="38px" $w="214px" $pad="1px 1px 6px">
        These Molecule tools are inactive.<br />To activate Randomizer, Accent<br />Modifiers, and GrooveMover, select a
        <br />region in the Arranger.
      </Notice>
    </Anchor>
  </Panel>
);

/* ---------- beat builder ---------- */
const BuilderGap = styled.div`
  flex: 0 0 4px;
  background: #787878;
`;
const Numbers = styled.div`
  flex: 0 0 ${(p) => p.$h};
  display: grid;
  grid-template-columns: repeat(8, 32px);
  align-items: center;
  justify-items: center;
  padding: 0 0 2px 22px;
  background: #787878;
  color: #b0b0b0;
`;
const BarList = styled.div`
  flex: 1;
  min-height: 0;
  display: flex;
`;
const BarArea = styled.div`
  position: relative;
  flex: 1;
  background: ${c.dim};
`;
const BuilderRow = styled.div`
  flex: 0 0 ${(p) => p.$h};
  display: flex;
  align-items: center;
  padding: 0 4px 0 2px;
  justify-content: space-between;
  background: #787878;
  color: #b0b0b0;
`;
const Sequencer = styled.div`
  flex: none;
  display: grid;
  grid-template-columns: 20px 256px 16px;
  grid-auto-rows: 22px;
  align-items: center;
  padding: 0 1px 0 6px;
  background: #787878;
`;
const Steps = styled.div`
  display: grid;
  grid-template-columns: repeat(8, 31px);
  column-gap: 1px;
  padding: 0 0 0 1px;
  align-self: stretch;
`;
const Step = styled.div`
  display: flex;
  align-items: center;
  justify-content: center;
  padding-top: 5px;
  background: ${(p) => p.$bg};
  svg { opacity: 0.25; }
`;
const Divider = styled.i`
  width: 2px;
  height: 23px;
  background: #5a5a5a;
`;
const seq = [
  ["#aead96", "violet", "o"],
  ["#adadad", "blue2", "oo"],
  ["#adadad", "blue2", ".o"],
  ["#adadad", "red3", "ooo"],
  ["#a9a9a9"], ["#a9a9a9"], ["#a9a9a9"], ["#a9a9a9"],
];
const eight = [1, 2, 3, 4, 5, 6, 7, 8];

const Builder = () => (
  <Panel $width="310px">
    <Header $dim $h="18px" $cols="1fr"><Title>Beat Builder</Title></Header>
    <BuilderGap />
    <Header $dim><Title>BarForm List</Title><Help dim /></Header>
    <Numbers $h="19px">{eight.map((n) => <span key={n}>{n}</span>)}</Numbers>
    <BarList>
      <BarArea>
        <Notice $left="31px" $top="349px" $w="239px" $pad="1px 1px 6px">
          The BeatBuilder panel is inactive.<br />To activate it, select one or more bars in the<br />Arranger. If the
          Arranger is empty, create a<br />track or load an instrument from the library<br />to get started.
        </Notice>
      </BarArea>
      <Scroll dim />
    </BarList>
    <BuilderRow $h="31px">
      <Line>
        <Btn $w="21px" $tone="dim" aria-label="Previous"><Chevron dir="up" w={14} h={14} /></Btn>
        <Btn $w="21px" $tone="dim" aria-label="Next"><Chevron dir="down" w={14} h={14} /></Btn>
      </Line>
      <span>Filters:</span>
      <Btn $w="63px" $tone="dimYellow">Suggested</Btn>
      <Btn $w="43px" $tone="dim">Similar</Btn>
      <Btn $w="55px" $tone="dim">Favorites</Btn>
      <Btn $w="22px" $tone="dim">All</Btn>
    </BuilderRow>
    <Header $dim><Title>BeatForm Sequencer</Title><Help dim /></Header>
    <Numbers $h="17px">{eight.map((n) => <span key={n}>{n}</span>)}</Numbers>
    <Sequencer>
      {seq.map(([bg, kind, marks], r) => (
        <React.Fragment key={r}>
          <Btn $w="20px" $tone="ghost" aria-label={`Play row ${r + 1}`}><Chevron w={14} h={14} /></Btn>
          <Steps>{eight.map((n) => <Step key={n} $bg={bg}>{kind && <Beat kind={kind} marks={marks} />}</Step>)}</Steps>
          <Btn $w="16px" $h="16px" $tone="ghost" aria-label={`Clear row ${r + 1}`}><CrossIcon /></Btn>
        </React.Fragment>
      ))}
    </Sequencer>
    <BuilderRow $h="29px">
      <Btn $w="38px" $tone="dim">Add...</Btn>
      <Btn $w="73px" $tone="dim">Surprise Me!</Btn>
      <Divider />
      <Btn $w="62px" $tone="dimYellow">Sequencer</Btn>
      <Btn $w="48px" $tone="dim">Remixer</Btn>
      <Divider />
      <Btn $w="22px" $tone="dim" aria-label="Sequencer menu"><ListIcon /></Btn>
    </BuilderRow>
  </Panel>
);

export default function App() {
  return (
    <Page>
      <Global />
      <TopBar />
      <Workspace>
        <LeftArea>
          <UpperRow><Library /><Arranger /></UpperRow>
          <LowerRow><HelpPanel /><Molecule /></LowerRow>
        </LeftArea>
        <Builder />
      </Workspace>
    </Page>
  );
}
